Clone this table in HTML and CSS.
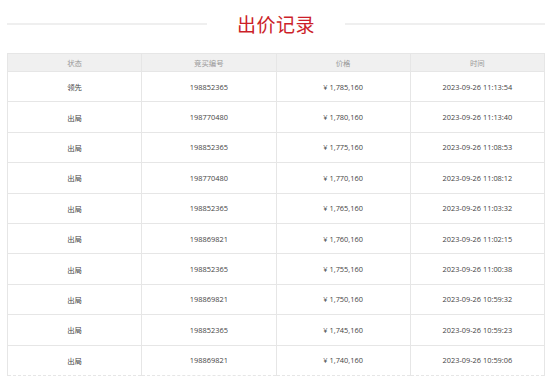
FILE: index.html
```html
<!DOCTYPE html>
<html lang="zh-CN">
<head>
<meta charset="utf-8">
<title>出价记录</title>
<link rel="stylesheet" href="styles.css">
</head>
<body>
<div class="page">
  <div class="title-row">
    <span class="title-line"></span>
    <h2 class="title">出价记录</h2>
    <span class="title-line"></span>
  </div>
  <table class="bids">
    <thead>
      <tr><th>状态</th><th>竞买编号</th><th>价格</th><th>时间</th></tr>
    </thead>
    <tbody>
      <tr><td>领先</td><td>198852365</td><td>¥ 1,785,160</td><td>2023-09-26 11:13:54</td></tr>
      <tr><td>出局</td><td>198770480</td><td>¥ 1,780,160</td><td>2023-09-26 11:13:40</td></tr>
      <tr><td>出局</td><td>198852365</td><td>¥ 1,775,160</td><td>2023-09-26 11:08:53</td></tr>
      <tr><td>出局</td><td>198770480</td><td>¥ 1,770,160</td><td>2023-09-26 11:08:12</td></tr>
      <tr><td>出局</td><td>198852365</td><td>¥ 1,765,160</td><td>2023-09-26 11:03:32</td></tr>
      <tr><td>出局</td><td>198869821</td><td>¥ 1,760,160</td><td>2023-09-26 11:02:15</td></tr>
      <tr><td>出局</td><td>198852365</td><td>¥ 1,755,160</td><td>2023-09-26 11:00:38</td></tr>
      <tr><td>出局</td><td>198869821</td><td>¥ 1,750,160</td><td>2023-09-26 10:59:32</td></tr>
      <tr><td>出局</td><td>198852365</td><td>¥ 1,745,160</td><td>2023-09-26 10:59:23</td></tr>
      <tr><td>出局</td><td>198869821</td><td>¥ 1,740,160</td><td>2023-09-26 10:59:06</td></tr>
    </tbody>
  </table>
</div>
</body>
</html>
```

FILE: styles.css
```css
html, body {
  margin: 0;
  padding: 0;
  background: #ffffff;
}
body {
  font-family: "Open Sans", "Noto Sans CJK SC", sans-serif;
  color: #444444;
}
.page {
  padding: 0 8px 0 7px;
}
.title-row {
  display: flex;
  align-items: center;
  gap: 30px;
  height: 48px;
}
.title-line {
  flex: 1;
  height: 2px;
  background: #efefef;
}
.title {
  margin: 0;
  font-family: "Noto Sans CJK SC", sans-serif;
  font-weight: normal;
  font-size: 19px;
  line-height: 24px;
  color: #cc1f2a;
  letter-spacing: 0.5px;
}
.bids {
  width: 100%;
  margin-top: 5px;
  border-collapse: collapse;
  table-layout: fixed;
  font-size: 7.4px;
}
.bids th, .bids td {
  border: 1px solid #e6e6e6;
  text-align: center;
  padding: 0;
}
.bids th {
  background: #f0f0f0;
  color: #999999;
  font-weight: normal;
  height: 17px;
  font-family: "Noto Sans CJK SC", sans-serif;
}
.bids td {
  height: 29.4px;
  color: #444444;
}
.bids td:first-child {
  font-family: "Noto Sans CJK SC", sans-serif;
}
.bids tbody tr:last-child td {
  border-bottom: 1px dashed #e6e6e6;
}
```
